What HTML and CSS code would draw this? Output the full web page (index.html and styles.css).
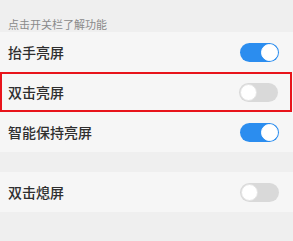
FILE: index.html
```html
<!DOCTYPE html>
<html lang="zh">
<head>
<meta charset="utf-8">
<link rel="stylesheet" href="styles.css">
</head>
<body>
<div class="page">
  <div class="hint">点击开关栏了解功能</div>
  <div class="group">
    <div class="row"><span class="label">抬手亮屏</span><span class="toggle on"></span></div>
    <div class="row highlight"><span class="label">双击亮屏</span><span class="toggle"></span></div>
    <div class="row"><span class="label">智能保持亮屏</span><span class="toggle on"></span></div>
  </div>
  <div class="group second">
    <div class="row"><span class="label">双击熄屏</span><span class="toggle"></span></div>
  </div>
</div>
</body>
</html>
```
FILE: styles.css
```css
html, body {
  margin: 0;
  padding: 0;
  background: #efefef;
}
.page {
  width: 293px;
  height: 241px;
  font-family: "Noto Sans CJK SC", "Noto Sans", sans-serif;
  color: #333;
}
.hint {
  height: 32px;
  box-sizing: border-box;
  padding: 16px 0 0 8px;
  font-size: 11px;
  line-height: 16px;
  color: #8a8a8a;
}
.group {
  background: #f6f6f6;
}
.second {
  margin-top: 20px;
}
.row {
  height: 40px;
  display: flex;
  align-items: center;
  justify-content: space-between;
  padding: 0 14px 0 8px;
  box-sizing: border-box;
}
.highlight {
  border: 2px solid #e8141b;
  padding: 0 12px 0 6px;
  margin-right: 1px;
}
.label {
  font-size: 14px;
  font-weight: 500;
  color: #2f2f2f;
}
.toggle {
  position: relative;
  width: 39px;
  height: 19px;
  border-radius: 10px;
  background: #d9d9d9;
}
.toggle::after {
  content: "";
  position: absolute;
  top: 1px;
  left: 1px;
  width: 17px;
  height: 17px;
  box-sizing: border-box;
  border: 1px solid #e4e4e4;
  border-radius: 50%;
  background: #fff;
}
.toggle.on {
  background: #2b8def;
}
.toggle.on::after {
  left: 21px;
  border-color: #fff;
}
```
